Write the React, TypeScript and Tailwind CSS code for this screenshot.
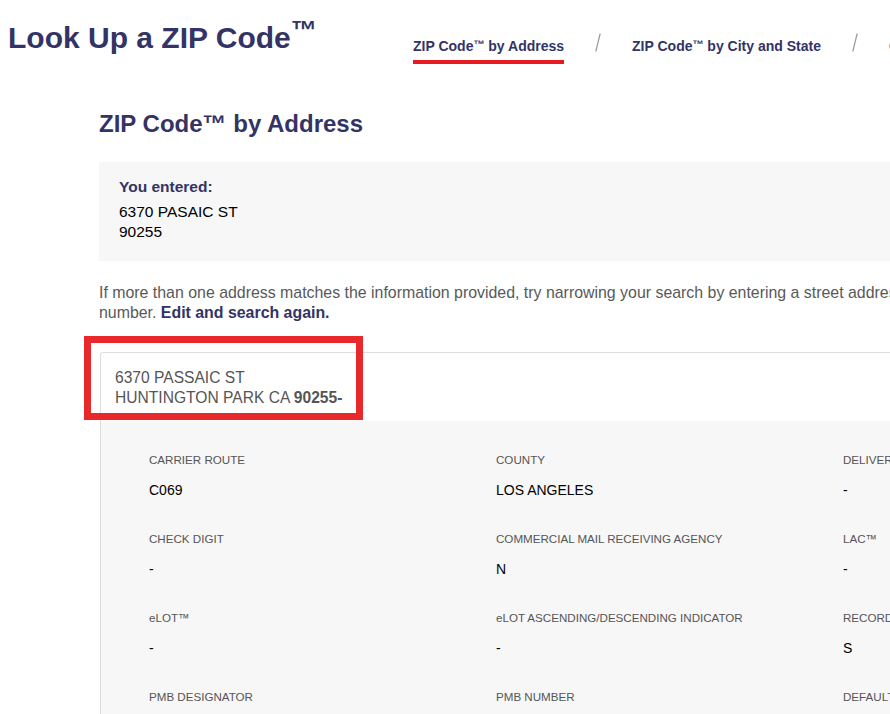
import React from "react";

const navy = "text-[#333366]";

function Slash() {
  return (
    <svg width="6" height="19" viewBox="0 0 6 19" className="mt-[-3px] shrink-0">
      <line x1="5.2" y1="0.5" x2="0.8" y2="18.5" stroke="#9a9a9a" strokeWidth="1.2" />
    </svg>
  );
}

const rows: [string, string][][] = [
  [
    ["CARRIER ROUTE", "C069"],
    ["COUNTY", "LOS ANGELES"],
    ["DELIVERY POINT CODE", "-"],
  ],
  [
    ["CHECK DIGIT", "-"],
    ["COMMERCIAL MAIL RECEIVING AGENCY", "N"],
    ["LAC™", "-"],
  ],
  [
    ["eLOT™", "-"],
    ["eLOT ASCENDING/DESCENDING INDICATOR", "-"],
    ["RECORD TYPE CODE", "S"],
  ],
  [
    ["PMB DESIGNATOR", "-"],
    ["PMB NUMBER", "-"],
    ["DEFAULT ADDRESS", "-"],
  ],
];

function NavTM() {
  return <sup className="text-[11px] top-[-0.3em]">™</sup>;
}

export default function App() {
  return (
    <div className="relative w-[890px] h-[714px] overflow-hidden bg-white font-['Liberation_Sans',Arial,Helvetica,sans-serif]">
      <div className="w-[1200px]">
        {/* Header */}
        <div className="flex items-start pl-[8px]">
          <div className="w-[405px] pt-[20px]">
            <h1 className={`text-[30px] leading-[36px] font-bold ${navy} whitespace-nowrap`}>
              Look Up a ZIP Code<span className="text-[26px] leading-[0] align-[9px]">™</span>
            </h1>
          </div>
          <div className="flex items-start gap-[31px] pt-[36px]">
            <div className={`text-[14px] leading-[20px] font-bold ${navy} pb-[4px] border-b-4 border-[#e71921] whitespace-nowrap`}>
              ZIP Code<NavTM /> by Address
            </div>
            <Slash />
            <div className={`text-[14px] leading-[20px] font-bold ${navy} whitespace-nowrap`}>
              ZIP Code<NavTM /> by City and State
            </div>
            <Slash />
            <div className={`text-[14px] leading-[20px] font-bold ${navy} whitespace-nowrap`}>
              Cities by ZIP Code<NavTM />
            </div>
          </div>
        </div>

        {/* Main */}
        <div className="ml-[99px] mt-[44px]">
          <h2 className={`text-[24px] leading-[32px] font-bold ${navy}`}>ZIP Code™ by Address</h2>

          <div className="mt-[22px] bg-[#f7f7f7] pl-[20px] pt-[15px] pb-[19px]">
            <div className={`text-[15.5px] leading-[20px] font-bold ${navy}`}>You entered:</div>
            <div className="mt-[5px] text-[15.5px] leading-[20px] text-black">
              <div>6370 PASAIC ST</div>
              <div>90255</div>
            </div>
          </div>

          <p className="mt-[22px] w-[840px] text-[15.9px] leading-[20px] text-[#595959]">
            If more than one address matches the information provided, try narrowing your search by entering a street address
            number. <span className={`font-bold ${navy}`}>Edit and search again.</span>
          </p>

          <div className="mt-[29px] ml-[1px] border border-[#dddddd] rounded-tl-[3px]">
            <div className="pl-[14px] pt-[15px] pb-[13px] text-[15.6px] leading-[20px] text-[#555555]">
              <div>6370 PASSAIC ST</div>
              <div>
                HUNTINGTON PARK CA <span className="font-bold">90255-</span>
              </div>
            </div>
            <div className="bg-[#f7f7f7] pl-[48px] pt-[30px] pb-[30px]">
              <div className="flex flex-col gap-[30px]">
                {rows.map((row, i) => (
                  <div key={i} className="grid grid-cols-[347px_347px_347px]">
                    {row.map(([label, value]) => (
                      <div key={label}>
                        <div className="text-[11.6px] leading-[18px] text-[#555555] whitespace-nowrap">{label}</div>
                        <div className="mt-[11px] text-[14px] leading-[20px] text-black">{value}</div>
                      </div>
                    ))}
                  </div>
                ))}
              </div>
            </div>
          </div>
        </div>
      </div>

      {/* Red annotation rectangle */}
      <div className="absolute left-[84px] top-[336px] w-[279px] h-[84px] border-[7px] border-[#e8282b] pointer-events-none" />
    </div>
  );
}
